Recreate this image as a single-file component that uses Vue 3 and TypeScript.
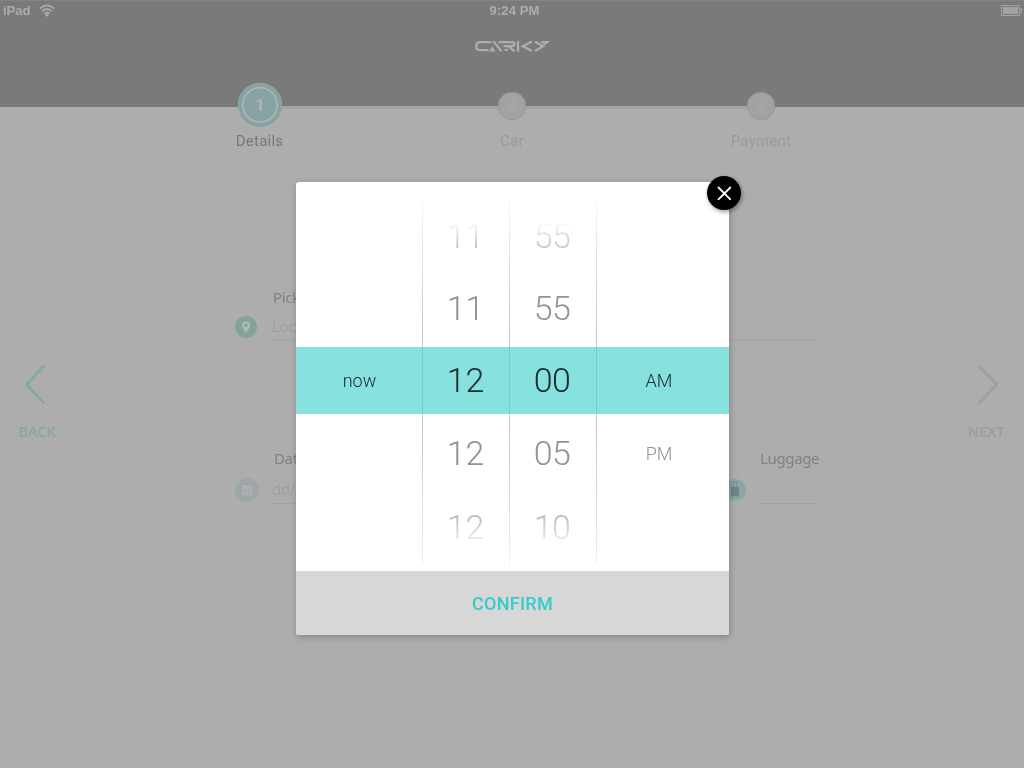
<script setup lang="ts">
interface Wheel {
  id: string
  rows: string[]
}

const steps = [
  { n: 1, label: 'Details', active: true },
  { n: 2, label: 'Car', active: false },
  { n: 3, label: 'Payment', active: false },
]

const wheels: Wheel[] = [
  { id: 'day', rows: ['', '', 'now', '', ''] },
  { id: 'hour', rows: ['11', '11', '12', '12', '12'] },
  { id: 'minute', rows: ['55', '55', '00', '05', '10'] },
  { id: 'period', rows: ['', '', 'AM', 'PM', ''] },
]
</script>

<template>
  <div class="screen">
    <header class="top">
      <div class="status">
        <div class="carrier">
          <span>iPad</span>
          <svg width="16" height="13" viewBox="0 0 16 13" fill="none" stroke="#adadad" stroke-width="1.7">
            <path d="M.8 4.7Q8-1.9 15.2 4.7M3.2 7.4Q8 3 12.8 7.4M5.5 9.8Q8 7.6 10.5 9.8" />
            <circle cx="8" cy="11.2" r="1.3" fill="#adadad" stroke="none" />
          </svg>
        </div>
        <span class="clock">9:24 PM</span>
        <div class="power">
          <svg width="22" height="12" viewBox="0 0 22 12">
            <rect x=".5" y=".5" width="18" height="10" fill="none" stroke="#a3a3a3" />
            <rect x="2" y="2" width="15" height="7" fill="#a3a3a3" />
            <path d="M19 3.5h1.5v4h-1.5" fill="none" stroke="#a3a3a3" />
          </svg>
        </div>
      </div>
      <svg class="logo" width="76" height="12" viewBox="0 0 76 12" fill="none" stroke="#adadad" stroke-width="2.3">
        <path d="M16.5 1.2H5.2Q1.2 1.2 1.2 5.2T5.2 9.2H13.5" />
        <path d="M17.2 5.2L20.4 10.4H14Z" fill="#adadad" stroke="none" />
        <path d="M18.2 0L26.5 10.4" />
        <path d="M23.5 1.2H37Q39.4 1.2 39.4 3.1T37 5.2H28.5M33.5 5.4L39.5 10.2" />
        <path d="M29.5 8.9H33" stroke-width="2" />
        <path d="M43 0V10.4M57 .4L47.7 5.2L57 10" />
        <path d="M60 .4L68 5.2L60 10" />
        <path d="M65 0H75.5L69.5 4.6Z" fill="#adadad" stroke="none" />
      </svg>
    </header>

    <nav class="stepper">
      <div v-for="s in steps" :key="s.n" class="step" :class="{ active: s.active }">
        <div class="node"><div class="dot"><span>{{ s.n }}</span></div></div>
        <div class="step-label">{{ s.label }}</div>
      </div>
    </nav>

    <main class="content">
      <div class="nav back">
        <svg width="24" height="42" viewBox="0 0 24 42" fill="none" stroke="#88a7a6" stroke-width="3" stroke-linecap="round">
          <path d="M18.5 3.5L1.5 21.5L18.5 39.5" />
        </svg>
        <span>BACK</span>
      </div>
      <div class="form">
        <div class="field pickup">
          <label>Pickup Location</label>
          <div class="entry">
            <svg width="24" height="24" viewBox="0 0 24 24">
              <circle cx="12" cy="12" r="11" fill="#81a496" />
              <path d="M12 18.5C10.8 15.2 8 13.3 8 10.2a4 4 0 0 1 8 0C16 13.3 13.2 15.2 12 18.5Z" fill="#b3b8b5" />
              <circle cx="12" cy="10.2" r="1.7" fill="#81a496" />
            </svg>
            <div class="input">Location</div>
          </div>
        </div>
        <div class="pair">
          <div class="field date">
            <label>Date</label>
            <div class="entry">
              <svg width="24" height="24" viewBox="0 0 24 24">
                <circle cx="12" cy="12" r="12" fill="#9ba7a9" />
                <rect x="7" y="6" width="10.5" height="11.5" fill="#afafaf" />
                <path d="M7 6.5h10.5" stroke="#92999b" stroke-width="1.6" stroke-dasharray="1.4 1" />
                <path d="M10.5 10.5v5M13.5 10.5v5M8.5 13h7" stroke="#a2a6a7" stroke-width=".8" />
              </svg>
              <div class="input">dd/mm</div>
            </div>
          </div>
          <div class="field luggage">
            <label>Luggage</label>
            <div class="entry">
              <svg width="22" height="22" viewBox="0 0 22 22">
                <circle cx="11" cy="11" r="11" fill="#8da5a5" />
                <path d="M9.5 8V2.5h3V8" fill="none" stroke="#788e95" />
                <rect x="7" y="8" width="8" height="9" fill="#70838b" />
                <path d="M8.5 17v2M13.5 17v2" stroke="#7c8e93" stroke-width="1.3" />
              </svg>
              <div class="input"></div>
            </div>
          </div>
        </div>
      </div>
      <div class="nav next">
        <svg width="24" height="42" viewBox="0 0 24 42" fill="none" stroke="#9f9f9f" stroke-width="3" stroke-linecap="round">
          <path d="M5.5 3.5L23 21.5L5.5 39.5" />
        </svg>
        <span>NEXT</span>
      </div>
    </main>

    <section class="modal">
      <div class="wheels">
        <div v-for="w in wheels" :key="w.id" class="wheel" :class="w.id">
          <div v-for="(r, i) in w.rows" :key="i" class="row" :class="'r' + i"><span>{{ r }}</span></div>
        </div>
        <div class="band"></div>
      </div>
      <button class="confirm">CONFIRM</button>
      <button class="close" aria-label="Close">
        <svg width="14" height="14" viewBox="0 0 14 14" stroke="#fff" stroke-width="1.8" stroke-linecap="round">
          <path d="M1.5 1.5L13.3 13.3M13.3 1.5L1.5 13.3" />
        </svg>
      </button>
    </section>
  </div>
</template>

<style>
body {
  margin: 0;
  background: #adadad;
}
</style>

<style scoped>
.screen {
  position: relative;
  width: 1024px;
  height: 768px;
  overflow: hidden;
  background: #adadad;
  font-family: Roboto, sans-serif;
}
.top {
  height: 107px;
  background: #7a7a7a;
  display: flex;
  flex-direction: column;
  align-items: center;
  box-shadow: inset 0 1px #838383;
}
.status {
  box-sizing: border-box;
  width: 100%;
  height: 21px;
  display: grid;
  grid-template-columns: 1fr auto 1fr;
  align-items: center;
  padding: 0 1px 0 3px;
  font: bold 13px/21px "Liberation Sans", sans-serif;
  color: #adadad;
}
.carrier {
  display: flex;
  align-items: center;
  gap: 9px;
}
.clock {
  letter-spacing: .1px;
  margin-left: 3px;
}
.power {
  display: flex;
  justify-content: flex-end;
}
.logo {
  margin: 20px 0 0 2px;
}
.stepper {
  position: relative;
  display: grid;
  grid-template-columns: 254px 250px 248px;
  width: 752px;
  margin: -27px 0 0 133px;
}
.stepper::before {
  content: "";
  position: absolute;
  left: 127px;
  top: 26px;
  width: 501px;
  height: 3px;
  background: #a2a2a2;
}
.step {
  position: relative;
  display: flex;
  flex-direction: column;
  align-items: center;
  color: #9a9a9a;
}
.node {
  height: 50px;
  display: flex;
  align-items: center;
}
.dot {
  box-sizing: border-box;
  width: 28px;
  height: 28px;
  margin-top: 2px;
  border-radius: 50%;
  background: #a2a2a2;
  box-shadow: inset 0 0 2px #8c8c8c;
  display: flex;
  align-items: center;
  justify-content: center;
  font-size: 17px;
  font-weight: 300;
  line-height: 18px;
  color: #acacac;
}
.dot span {
  margin-top: -2px;
}
.active .dot {
  width: 44px;
  height: 44px;
  margin-top: 0;
  background: #87a3a4;
  box-shadow: inset 0 0 0 4px #87a3a4, inset 0 0 0 5.6px #afb5b5;
  font-weight: 500;
  color: #b4b8b8;
}
.active .dot span {
  margin-top: -1px;
}
.step-label {
  margin-top: 1px;
  font-size: 15px;
  line-height: 20px;
  letter-spacing: .25px;
}
.active .step-label {
  color: #777;
  margin-right: 1px;
}
.content {
  display: grid;
  grid-template-columns: 74px 1fr 76px;
}
.nav {
  display: flex;
  flex-direction: column;
  align-items: center;
  padding-top: 212px;
  font: 600 15px/20px "Noto Sans", sans-serif;
  letter-spacing: -.4px;
}
.nav span {
  margin-top: 16px;
}
.back {
  color: #88a7a6;
}
.next {
  color: #9f9f9f;
}
.form {
  padding: 135px 131px 0 161px;
}
label {
  display: block;
  margin-left: 38px;
  font: 15px/22px "Noto Sans", sans-serif;
  letter-spacing: -.35px;
  color: #818181;
}
.entry {
  display: flex;
  align-items: center;
  gap: 13px;
  margin-left: -1px;
}
.input {
  flex: 1;
  height: 27px;
  border-bottom: 1px solid #a3a3a3;
  font: 300 15px/27px "Noto Sans", sans-serif;
  text-indent: 1px;
  color: #989898;
}
.pickup .entry {
  margin-top: 5px;
}
.pair .entry {
  margin-top: 7px;
}
.pair {
  display: flex;
  justify-content: space-between;
  margin-top: 106px;
}
.date {
  width: 280px;
}
.date .entry {
  margin-left: 0;
  gap: 12px;
}
.date label {
  margin-left: 39px;
}
.luggage {
  width: 94px;
}
.luggage label {
  margin-left: 37px;
}
.luggage .entry {
  margin-left: 1px;
  gap: 14px;
}
.modal {
  position: absolute;
  left: 296px;
  top: 182px;
  width: 433px;
  height: 453px;
  border-radius: 3px;
  background: #fff;
  box-shadow: 1px 2px 6px rgba(0, 0, 0, .25);
  display: flex;
  flex-direction: column;
}
.wheels {
  position: relative;
  height: 389px;
  box-sizing: border-box;
  padding-top: 18px;
  display: grid;
  grid-template-columns: 127px 87px 87px 132px;
}
.band {
  position: absolute;
  left: 0;
  right: 0;
  top: 165px;
  height: 67px;
  background: #86e1df;
  mix-blend-mode: multiply;
}
.wheel {
  position: relative;
  display: grid;
  grid-template-rows: 72px 71px 73px 73px 75px;
  text-align: center;
  height: 364px;
  font-size: 34px;
  font-weight: 300;
}
.wheel:not(.period)::after {
  content: "";
  position: absolute;
  right: 0;
  top: 1px;
  width: 1px;
  height: 363px;
  background: linear-gradient(rgba(200, 200, 200, .15), #c8c8c8 35%, #c8c8c8 40.2%, #e6e6e6 40.2%, #e6e6e6 58.7%, #c8c8c8 58.7%, #c8c8c8 65%, rgba(200, 200, 200, .25));
}
.row {
  display: flex;
  align-items: center;
  justify-content: center;
  color: #939393;
}
.r2 {
  color: #333;
}
.r0 span {
  color: transparent;
  background: linear-gradient(#fff 12%, #c2c2c2 82%);
  background-clip: text;
}
.r4 span {
  color: transparent;
  background: linear-gradient(#b8b8b8 20%, #ececec 85%);
  background-clip: text;
}
.hour .row {
  padding-right: 2px;
}
.minute .row {
  padding-right: 3px;
}
.minute {
  letter-spacing: -.6px;
}
.day,
.period {
  font-size: 18px;
}
.day .r2,
.period .r2,
.period .r3 {
  padding-top: 2px;
}
.period {
  padding-right: 8px;
}
button {
  border: 0;
  padding: 0;
  font-family: inherit;
}
.confirm {
  height: 64px;
  background: #d7d7d7;
  border-radius: 0 0 3px 3px;
  color: #33cccb;
  font-size: 18px;
  font-weight: 500;
  letter-spacing: .3px;
}
.close {
  position: absolute;
  left: 411px;
  top: -6px;
  width: 34px;
  height: 34px;
  border-radius: 50%;
  background: #000;
  box-shadow: 1px 2px 4px rgba(0, 0, 0, .4);
  display: flex;
  align-items: center;
  justify-content: center;
}
</style>
